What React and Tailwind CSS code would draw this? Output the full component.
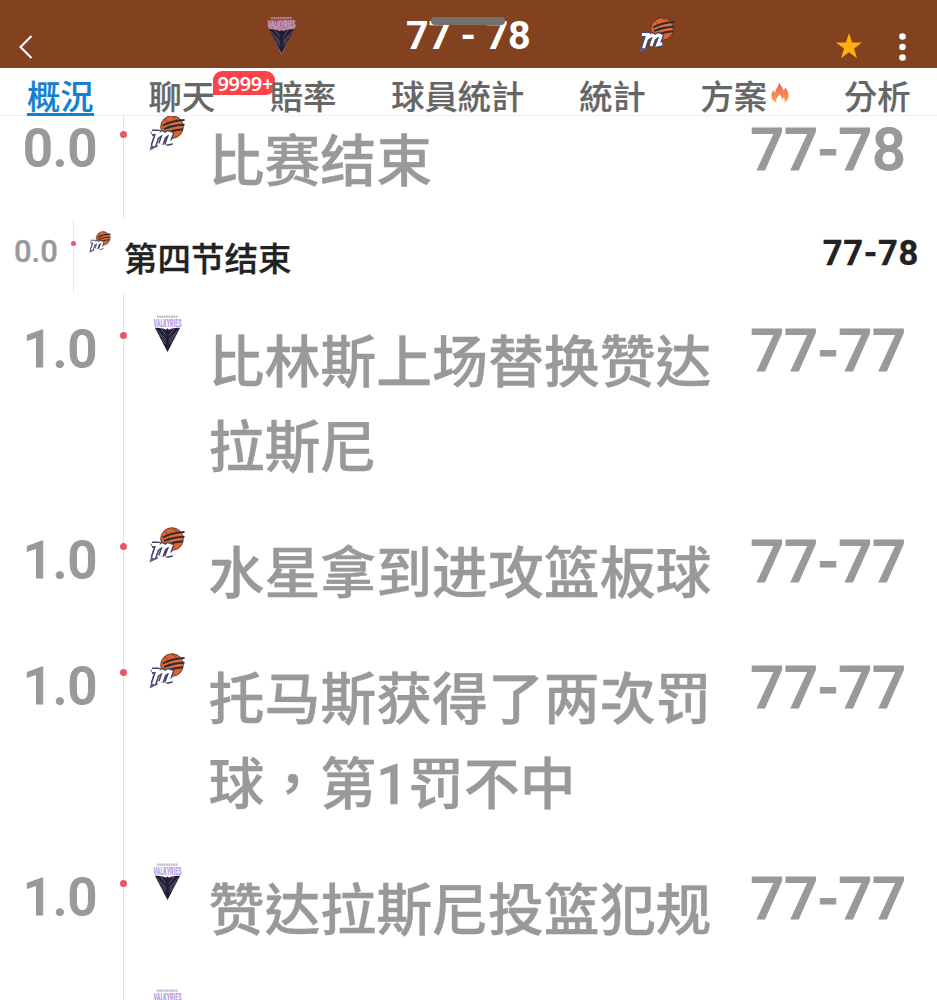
import React from 'react';

const TABS = [
  { label: '概況', active: true },
  { label: '聊天', badge: '9999+' },
  { label: '賠率' },
  { label: '球員統計' },
  { label: '統計' },
  { label: '方案', hot: true },
  { label: '分析' },
];

const EVENTS = [
  { time: '0.0', team: 'mercury', text: '比赛结束', score: '77-78' },
  { time: '0.0', team: 'mercury', text: '第四节结束', score: '77-78', period: true },
  { time: '1.0', team: 'valkyries', text: '比林斯上场替换赞达拉斯尼', score: '77-77', tall: true },
  { time: '1.0', team: 'mercury', text: '水星拿到进攻篮板球', score: '77-77' },
  { time: '1.0', team: 'mercury', text: '托马斯获得了两次罚球，第1罚不中', score: '77-77', tall: true },
  { time: '1.0', team: 'valkyries', text: '赞达拉斯尼投篮犯规', score: '77-77' },
  { time: '1.0', team: 'valkyries', text: '', score: '' },
];

const M_STROKES = 'M3 17.500h6L4.500 31M8 21.500l5-3.500 2.500 1L12 29M14.500 21.500l4.500-3.500 3 1-3.300 8.700 4.500-1';

const MercuryLogo = ({ className }) => (
  <svg viewBox="0 0 36 36" className={className}>
    <circle cx="23" cy="12" r="11.300" fill="#e0622a" stroke="#3b2d33" strokeWidth="0.800" />
    <path d="M16 4c3 3 4 8 4 14M23 1.500c3 1.500 5 3 6 5" fill="none" stroke="#8a3a20" strokeWidth="0.800" />
    <path d="M14 10.500c7-4 13-5 21.500-5.500M15 14c7-3 13-4 20.500-4.200M19 17.500c5-2 10-3 15-3.200" fill="none" stroke="#2b2a33" strokeWidth="1.900" />
    <path d="M16 11.500c6-3 12-4 18-4.500M18 15c6-2.200 11-2.800 16-3" fill="none" stroke="#b9927e" strokeWidth="0.500" />
    <path d="M1 16l4 3-4.500 16.500 8.500-4z" fill="#5d5a88" />
    <path d={M_STROKES} fill="none" stroke="#46456e" strokeWidth="6" strokeLinejoin="round" />
    <path d={M_STROKES} fill="none" stroke="#fff" strokeWidth="3" />
  </svg>
);

const ValkyriesLogo = ({ className, dark }) => (
  <svg viewBox="0 0 32 40" className={className}>
    {dark && <path d="M1.500 10h29L16 40z" fill="#b98fa5" />}
    {dark && <path d="M3 6h26v7H3z" fill="#a06d80" />}
    {/* tiny line of lettering above the name */}
    <path d="M5 2.500h22" stroke={dark ? '#b084a4' : '#c3b8d0'} strokeWidth="2.400" strokeDasharray="1.900 0.500" />
    <text x="16" y="13.200" textAnchor="middle" textLength="29" lengthAdjust="spacingAndGlyphs" className="font-['Roboto',sans-serif] text-[11px] font-black" fill={dark ? '#c99bc0' : '#b99edc'}>VALKYRIES</text>
    <path d="M3 14c4 0 9 .5 11.500 2l1.500-1.500 1.500 1.500c2.500-1.500 7.500-2 11.500-2L16 39z" fill="#211c33" />
    <path d="M4.500 16l10 10M7 20.500l7.500 8M10 26l4.500 5M27.500 16l-10 10M25 20.500l-7.500 8M22 26l-4.500 5M9 15l5.500 7M23 15l-5.500 7" fill="none" stroke="#796b90" strokeWidth="0.800" />
  </svg>
);

const TeamLogo = ({ team, small }) =>
  team === 'mercury' ? (
    <MercuryLogo className={small ? 'ml-[15px] mt-[12px] size-[22px]' : 'ml-[25px] mt-[22px] size-[36px]'} />
  ) : (
    <ValkyriesLogo className="ml-[28px] mt-[20px] h-[39px] w-[31px]" />
  );

const Header = () => (
  <header className="relative flex h-[68px] bg-[#82421f]">
    <svg viewBox="0 0 14 24" className="ml-[19px] mt-[35px] h-[24px] w-[14px]">
      <path d="M12.500 1L1.500 12l11 11" fill="none" stroke="#fff" strokeWidth="2" />
    </svg>
    <ValkyriesLogo dark className="ml-[233px] mt-[15px] h-[40px] w-[31px]" />
    <h1 className="ml-[109px] mt-[15px] w-[125px] whitespace-nowrap text-[39.500px] font-bold leading-[42px] tracking-[-0.200px] text-white">77 - 78</h1>
    <MercuryLogo className="ml-[108px] mt-[17px] size-[36px]" />
    <svg viewBox="0 0 26 26" className="ml-[161px] mt-[33px] size-[26px]">
      <path d="M13 0l3.100 9.500H26l-8 6 3 9.700-8-6-8 6 3-9.700-8-6h9.900z" fill="#ffb010" />
    </svg>
    <svg viewBox="0 0 8 30" className="ml-[36px] mt-[32px] h-[30px] w-[8px]" fill="#fff">
      <circle cx="4.500" cy="4.500" r="3.300" />
      <circle cx="4.500" cy="15" r="3.300" />
      <circle cx="4.500" cy="25.500" r="3.300" />
    </svg>
    {/* window drag handle */}
    <div className="absolute left-[431px] top-[17px] h-[8px] w-[74px] rounded-full bg-[#75716f]" />
  </header>
);

const Tabs = () => (
  <nav className="flex h-[48px] gap-[54.800px] border-b border-[#eee] bg-white pl-[27px]">
    {TABS.map((tab) => (
      <div
        key={tab.label}
        className={`relative flex h-[48px] shrink-0 whitespace-nowrap text-[33.3px] font-medium leading-[60px] [-webkit-text-stroke:0.2px] ${
          tab.active ? 'text-[#1480d2]' : 'text-[#666]'
        }`}
      >
        {tab.badge && (
          <span className="absolute left-[65px] top-[3px] h-[24px] w-[62px] rounded-[9px] rounded-bl-none bg-[#fc4348] pl-[4px] font-['Noto_Sans',sans-serif] text-[20px] font-semibold leading-[25px] tracking-[-0.300px] text-white [-webkit-text-stroke:0]">
            {tab.badge}
          </span>
        )}
        <span className="relative">{tab.label}</span>
        {tab.active && <div className="absolute inset-x-0 bottom-0 h-[3px] bg-[#1480d2]" />}
        {tab.hot && (
          <svg viewBox="0 0 18 22" className="ml-[4px] mt-[14px] h-[21px] w-[18px]">
            <defs>
              <linearGradient id="flame" x1="0" y1="0" x2="0" y2="1">
                <stop offset="0" stopColor="#f4574b" />
                <stop offset="1" stopColor="#f9a65c" />
              </linearGradient>
            </defs>
            <path d="M8 0c1 4 4.500 5.500 4.500 9 1.200-.8 1.500-2 1.500-3.500 3 3 4 6 4 9 0 3-1.500 5.500-4.500 7.200.8-2 .5-4-1-5.200-.6 1-1.200 1.300-2 1.300.3-2.300-.5-4-2.500-5.300 0 3-3 4-3 6.500 0 1 .3 2 .9 2.800C2 20.500 0 18 0 14.500 0 12 1 10 2.500 8.500c.2 1.500.7 2.200 1.500 2.800C4 7 8 5 8 0z" fill="url(#flame)" />
          </svg>
        )}
      </div>
    ))}
  </nav>
);

const PeriodRow = ({ event }) => (
  <div className="flex h-[75px]">
    <div className="w-[73px] pl-[14px] pt-[15px] text-[31px] font-medium leading-[36px] text-[#999] [-webkit-text-stroke:0.3px]">{event.time}</div>
    <div className="relative w-px bg-[#eaeaea]">
      <span className="absolute -left-[2px] top-[22px] size-[5px] rounded-full bg-[#e8586a]" />
    </div>
    <div className="w-[50px]">
      <TeamLogo team={event.team} small />
    </div>
    <div className="flex-1 pt-[16px] text-[33.500px] font-medium leading-[50px] text-[#222] [-webkit-text-stroke:0.3px]">{event.text}</div>
    <div className="pr-[18px] pt-[14px] text-[34.500px] font-bold leading-[40px] tracking-[0.700px] text-[#222] [-webkit-text-stroke:0.3px]">{event.score}</div>
  </div>
);

const EventRow = ({ event }) => (
  <div className={`flex ${event.tall ? 'h-[211px]' : 'h-[126px]'}`}>
    <div className="w-[123px] shrink-0 pl-[23px] pt-[25px] text-[52.500px] font-medium leading-[60px] text-[#999] [-webkit-text-stroke:1px]">{event.time}</div>
    <div className="relative w-px shrink-0 bg-[#e2e2e2]">
      <span className="absolute -left-[3px] top-[38px] size-[7px] rounded-full bg-[#e8586a]" />
    </div>
    <div className="w-[84.500px] shrink-0">
      <TeamLogo team={event.team} />
    </div>
    <div className="w-[505px] shrink-0 pt-[27px] text-[55.900px] font-medium leading-[85px] text-[#999] [-webkit-text-stroke:0.400px]">{event.text}</div>
    <div className="ml-auto shrink-0 pr-[31px] pt-[26px] text-[59.600px] font-medium leading-[62px] text-[#999] [-webkit-text-stroke:1px]">{event.score}</div>
  </div>
);

export default function App() {
  return (
    <div className="h-[1000px] w-[937px] overflow-hidden bg-white font-['Roboto','Noto_Sans_CJK_TC',sans-serif]">
      <div className="relative z-10">
        <Header />
        <Tabs />
      </div>
      {/* list is scrolled slightly under the tab bar */}
      <div className="-mt-[23px]">
        {EVENTS.map((event, i) =>
          event.period ? <PeriodRow key={i} event={event} /> : <EventRow key={i} event={event} />
        )}
      </div>
    </div>
  );
}
